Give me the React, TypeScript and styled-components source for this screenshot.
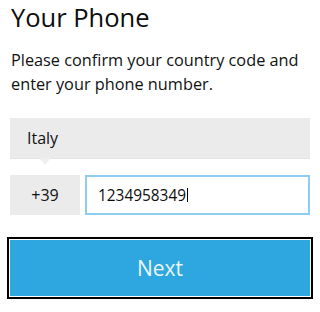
import React from "react";
import styled, { createGlobalStyle } from "styled-components";

const Global = createGlobalStyle`
  html, body { margin: 0; padding: 0; background: #ffffff; }
  body { font-family: "Open Sans", "Noto Sans", sans-serif; color: #111111; }
  * { box-sizing: border-box; }
`;

const Page = styled.div`
  width: 320px;
  height: 312px;
  padding: 0 10px;
  display: flex;
  flex-direction: column;
  overflow: hidden;
`;

const Title = styled.h1`
  margin: 0;
  font-size: 25.5px;
  line-height: 34px;
  font-weight: 400;
  color: #0d0d0d;
  padding-left: 1px;
`;

const Intro = styled.p`
  margin: 14px 0 0;
  font-size: 16.3px;
  line-height: 24px;
  color: #111111;
  padding-left: 1px;
`;

const CountrySelect = styled.div`
  position: relative;
  margin-top: 22px;
  height: 41px;
  background: #ebebeb;
  border-bottom: 1px solid #e3e3e3;
  display: flex;
  align-items: center;
  padding-left: 17px;
  font-size: 16px;
  color: #111111;

  &::after {
    content: "";
    position: absolute;
    left: 29px;
    top: 100%;
    border-left: 6px solid transparent;
    border-right: 6px solid transparent;
    border-top: 7px solid #efefef;
  }
`;

const PhoneRow = styled.div`
  margin-top: 16px;
  display: flex;
  gap: 5px;
  height: 40px;
`;

const CodeBox = styled.div`
  width: 70px;
  background: #ebebeb;
  display: flex;
  align-items: center;
  justify-content: center;
  font-size: 16px;
  color: #111111;
`;

const NumberField = styled.div`
  flex: 1;
  border: 2px solid #8fcdf0;
  background: #ffffff;
  display: flex;
  align-items: center;
  padding-left: 11px;
  font-size: 15.4px;
  color: #0d0d0d;
`;

const Caret = styled.span`
  display: inline-block;
  width: 1px;
  height: 14px;
  background: #000000;
  margin-left: 1px;
`;

const NextButton = styled.button`
  margin-top: 25px;
  height: 56px;
  width: 100%;
  border: none;
  background: #2ea6e0;
  color: #eaf7fd;
  font-family: "Open Sans", "Noto Sans", sans-serif;
  font-size: 21px;
  outline: 2px solid #000000;
  outline-offset: 1px;
  cursor: pointer;
`;

export default function App() {
  return (
    <>
      <Global />
      <Page>
        <Title>Your Phone</Title>
        <Intro>Please confirm your country code and enter your phone number.</Intro>
        <CountrySelect>Italy</CountrySelect>
        <PhoneRow>
          <CodeBox>+39</CodeBox>
          <NumberField>
            <span>1234958349</span>
            <Caret />
          </NumberField>
        </PhoneRow>
        <NextButton>Next</NextButton>
      </Page>
    </>
  );
}
